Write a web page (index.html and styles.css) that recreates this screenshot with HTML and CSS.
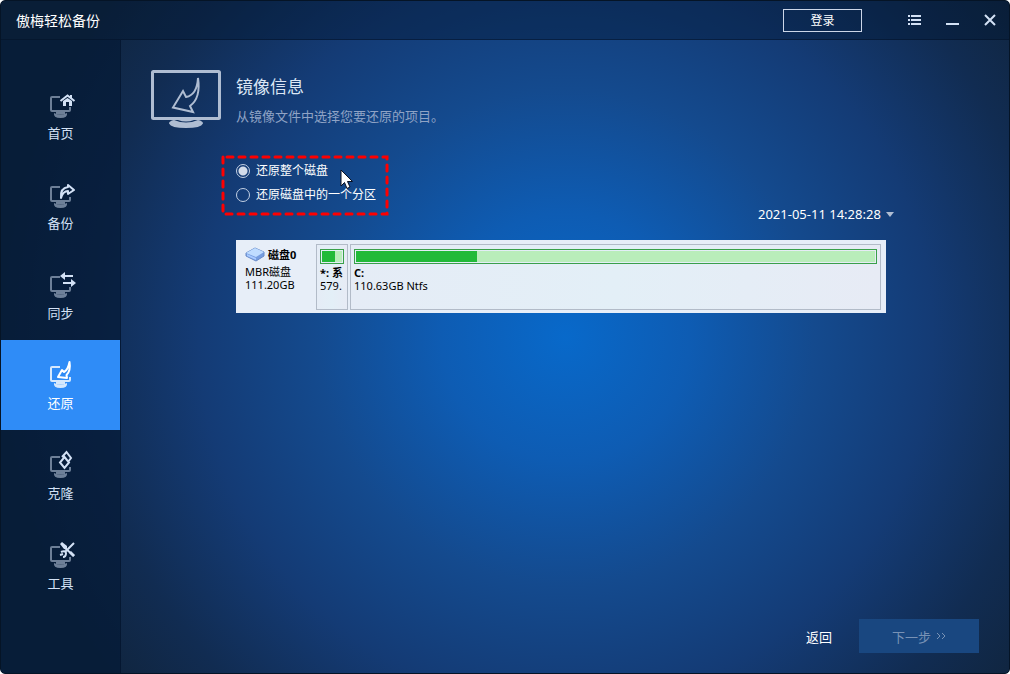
FILE: index.html
```html
<!DOCTYPE html>
<html lang="zh-CN">
<head>
    <meta charset="UTF-8">
    <meta name="viewport" content="width=device-width, initial-scale=1.0">
    <title>傲梅轻松备份</title>
    <link rel="stylesheet" href="styles.css">
</head>
<body>
    <!-- Shared monitor outline used by the sidebar icons -->
    <svg class="symbols" aria-hidden="true">
        <symbol id="monitor" viewBox="0 0 28 26">
            <path d="M12 4H4Q3 4 3 5V17Q3 18 4 18H21Q22 18 22 17V14" fill="none" stroke="currentColor" stroke-width="2"/>
            <path d="M6 20Q12 23 19 20Q20 25 12.500 25Q5 25 6 20Z" fill="currentColor"/>
            <path d="M8 19H17V21Q12 22 8 21Z" fill="currentColor"/>
        </symbol>
    </svg>

    <div class="window">
        <header class="titlebar">
            <h1 class="app-name">傲梅轻松备份</h1>
            <button class="login" type="button">登录</button>
            <button class="win-button" type="button" aria-label="菜单">
                <svg width="14" height="12" viewBox="0 0 14 12" fill="currentColor"><path d="M1 1h2v2H1zM4 1h10v2H4zM1 5h2v2H1zM4 5h10v2H4zM1 9h2v2H1zM4 9h10v2H4z"/></svg>
            </button>
            <button class="win-button" type="button" aria-label="最小化">
                <svg width="14" height="12" viewBox="0 0 14 12" fill="currentColor"><path d="M1 9h13v2H1z"/></svg>
            </button>
            <button class="win-button" type="button" aria-label="关闭">
                <svg width="14" height="12" viewBox="0 0 14 12" fill="none" stroke="currentColor" stroke-width="2"><path d="M2 1L12 11M12 1L2 11"/></svg>
            </button>
        </header>

        <div class="body">
            <nav class="sidebar">
                <a class="nav-item" href="#home">
                    <svg class="nav-icon" viewBox="0 0 28 26">
                        <use class="base" href="#monitor"/>
                        <path d="M12.500 8L19.500 2.500L26.500 8" fill="none" stroke="currentColor" stroke-width="2"/>
                        <path d="M15 8L19.500 5L24 8V13H21V9H18V13H15ZM22 2H24V6L22 4Z" fill="currentColor"/>
                    </svg>
                    <span>首页</span>
                </a>
                <a class="nav-item" href="#backup">
                    <svg class="nav-icon" viewBox="0 0 28 26">
                        <use class="base" href="#monitor"/>
                        <path d="M13 15Q12 5 20 4V2L26 7L20 11V8Q15 8 13 15Z" fill="none" stroke="currentColor" stroke-width="2" stroke-linejoin="round"/>
                    </svg>
                    <span>备份</span>
                </a>
                <a class="nav-item" href="#sync">
                    <svg class="nav-icon" viewBox="0 0 28 26">
                        <use class="base" href="#monitor"/>
                        <path d="M12 3L17 -1V2H25V4H17V7ZM28 10L23 6V9H15V11H23V14Z" fill="currentColor"/>
                    </svg>
                    <span>同步</span>
                </a>
                <a class="nav-item active" href="#restore" aria-current="page">
                    <svg class="nav-icon" viewBox="0 0 28 26">
                        <use class="base" href="#monitor"/>
                        <path d="M21.500 -1Q23 8 18.500 12L19 15L10 14L14 7L16 9Q20 7 21.500 -1Z" fill="none" stroke="currentColor" stroke-width="2" stroke-linejoin="round"/>
                    </svg>
                    <span>还原</span>
                </a>
                <a class="nav-item" href="#clone">
                    <svg class="nav-icon" viewBox="0 0 28 26">
                        <use class="base" href="#monitor"/>
                        <path d="M16.500 4L21 9.500L16.500 15L12 9.500ZM14 4L18.500 -1L23 5L20 9" fill="none" stroke="currentColor" stroke-width="2"/>
                    </svg>
                    <span>克隆</span>
                </a>
                <a class="nav-item" href="#tools">
                    <svg class="nav-icon" viewBox="0 0 28 26">
                        <use class="base" href="#monitor"/>
                        <path d="M26 0L17 9M17 5L26 13" fill="none" stroke="currentColor" stroke-width="2"/>
                        <path d="M12 1L14 -1L19 3L19 6L16 6ZM21 10L23 8L27 12L25 14Z" fill="currentColor"/>
                        <path d="M13 9Q17 7 18 10Q18 14 15 14M12 12L15 11" fill="none" stroke="currentColor" stroke-width="2"/>
                    </svg>
                    <span>工具</span>
                </a>
            </nav>

            <main class="content">
                <section class="page-head">
                    <svg class="page-icon" viewBox="0 0 70 58" aria-hidden="true">
                        <rect x="1.500" y="1.500" width="67" height="47" rx="1" fill="none" stroke="currentColor" stroke-width="3"/>
                        <path d="M23 50Q35 55 47 50Q52 51 52 53.500Q50 58 35 58Q20 58 18 53.500Q18 51 23 50Z" fill="currentColor"/>
                        <path d="M27 50H43Q35 53 27 50Z" fill="currentColor"/>
                        <path d="M47 8Q50 28 39 36L42 42L22 37.500L32 21L35 27Q46 25 47 8Z" fill="none" stroke="currentColor" stroke-width="2"/>
                    </svg>
                    <div>
                        <h2 class="page-title">镜像信息</h2>
                        <p class="page-hint">从镜像文件中选择您要还原的项目。</p>
                    </div>
                </section>

                <div class="options" role="radiogroup" aria-label="还原">
                    <label class="option"><input type="radio" name="scope" checked>还原整个磁盘</label>
                    <label class="option"><input type="radio" name="scope">还原磁盘中的一个分区</label>
                    <svg class="marker" aria-hidden="true"><rect width="100%" height="100%"/></svg>
                    <svg class="cursor" width="14" height="21" viewBox="0 0 14 21" aria-hidden="true">
                        <path d="M1 1V17L4.500 13.500L7 19.500L10 18L7.500 12.500H12.500Z" fill="#fff" stroke="#0a1020"/>
                    </svg>
                </div>

                <div class="version">
                    <select class="version-select" aria-label="备份时间">
                        <option>2021-05-11 14:28:28</option>
                    </select>
                    <svg class="caret" width="8" height="5" viewBox="0 0 8 5" aria-hidden="true"><path d="M0 0H8L4 5Z" fill="currentColor"/></svg>
                </div>

                <section class="disk">
                    <div class="disk-info">
                        <div class="disk-name">
                            <svg width="20" height="15" viewBox="0 0 20 15" aria-hidden="true">
                                <path d="M1 6L10 1L19 5V9L11 14L1 9Z" fill="#769de0" stroke="#688bc8"/>
                                <path d="M1 6L10 1L19 5L11 10Z" fill="#bfdcff"/>
                                <path d="M2 7L11 11V13L2 9Z" fill="#a8caff"/>
                            </svg>
                            <b>磁盘0</b>
                        </div>
                        <div>MBR磁盘</div>
                        <div>111.20GB</div>
                    </div>
                    <div class="partition reserved">
                        <div class="usage"><div class="used" style="width: 64%"></div></div>
                        <b>*: 系</b>
                        <div>579.</div>
                    </div>
                    <div class="partition">
                        <div class="usage"><div class="used" style="width: 23.300%"></div></div>
                        <b>C:</b>
                        <div>110.63GB Ntfs</div>
                    </div>
                </section>

                <footer class="actions">
                    <button class="back" type="button">返回</button>
                    <button class="next" type="button" disabled>
                        下一步
                        <svg width="10" height="8" viewBox="0 0 10 8" fill="none" stroke="currentColor"><path d="M1 1L4 4L1 7M6 1L9 4L6 7"/></svg>
                    </button>
                </footer>
            </main>
        </div>
    </div>
</body>
</html>
```
FILE: styles.css
```css
* {
    box-sizing: border-box;
}

body {
    margin: 0;
    background: #fff;
    color: #fff;
    font-family: "Noto Sans", "Noto Sans CJK SC", sans-serif;
    font-size: 12px;
}

h1, h2, p {
    margin: 0;
    font-weight: normal;
}

button {
    padding: 0;
    border: none;
    background: none;
    color: inherit;
    font: inherit;
}

svg {
    display: block;
}

.symbols {
    position: absolute;
    width: 0;
    height: 0;
}

.window {
    display: flex;
    flex-direction: column;
    min-height: 100vh;
    border: 1px solid #051426;
    border-radius: 5px;
    overflow: hidden;
    background: radial-gradient(ellipse 56% 84% at 56% 50%, #0869ca 0%, #0e5cb3 22%, #144a8e 44%, #143b75 65%, #112c52 85%, #10253f 100%);
}

/* Title bar */
.titlebar {
    display: flex;
    align-items: center;
    height: 39px;
    padding: 0 12px 0 15px;
    border-bottom: 1px solid rgba(2, 16, 38, 0.5);
    background: rgba(1, 20, 45, 0.4);
}

.app-name {
    flex: 1;
    font-size: 14px;
}

.login {
    width: 79px;
    height: 23px;
    margin-right: 45px;
    border: 1px solid #ccd6e8;
    line-height: 21px;
}

.win-button {
    color: #d3e1f5;
}

.win-button + .win-button {
    margin-left: 24px;
}

/* Sidebar */
.body {
    display: flex;
    flex: 1;
}

.sidebar {
    width: 120px;
    padding-top: 30px;
    border-right: 1px solid rgba(2, 16, 38, 0.4);
    background: rgba(4, 26, 54, 0.7);
}

.nav-item {
    display: flex;
    flex-direction: column;
    align-items: center;
    gap: 4px;
    height: 90px;
    padding-top: 23px;
    color: #d3e1f5;
    font-size: 13px;
    line-height: 20px;
    text-decoration: none;
}

.nav-item.active {
    background: #2f8cf7;
    color: #fff;
}

.nav-icon {
    width: 28px;
    height: 26px;
    margin-left: 2px;
    overflow: visible;
}

.base {
    opacity: 0.5;
}

.active .base {
    opacity: 0.8;
}

/* Main area */
.content {
    display: flex;
    flex: 1;
    flex-direction: column;
    padding: 30px 30px 20px;
}

.page-head {
    display: flex;
    gap: 15px;
    height: 85px;
}

.page-icon {
    width: 70px;
    height: 58px;
    color: #afbdd2;
}

.page-title {
    margin-top: 5px;
    color: #dce6f5;
    font-size: 17px;
    line-height: 24px;
}

.page-hint {
    margin-top: 7px;
    color: #8fa3c5;
    font-size: 13px;
    line-height: 20px;
}

.options {
    position: relative;
    align-self: flex-start;
    margin-left: 70px;
    padding: 4px 13px 9px 15px;
}

.option {
    display: flex;
    align-items: center;
    gap: 6px;
    line-height: 24px;
}

.option input {
    appearance: none;
    width: 14px;
    height: 14px;
    margin: 0;
    border: 1px solid #c3d0e4;
    border-radius: 50%;
}

.option input:checked {
    background: radial-gradient(circle, #d3dceb 0 4px, transparent 5px);
}

.marker {
    position: absolute;
    inset: 2px;
    width: calc(100% - 4px);
    height: calc(100% - 4px);
    overflow: visible;
}

.marker rect {
    fill: none;
    stroke: #f00;
    stroke-width: 3;
    stroke-dasharray: 6 6;
    stroke-dashoffset: -4;
    stroke-linecap: round;
}

.cursor {
    position: absolute;
    top: 14px;
    left: 119px;
}

.version {
    display: flex;
    align-items: center;
    align-self: flex-end;
    gap: 5px;
    margin: -13px 85px 0 0;
    color: #b0bdd2;
}

.version-select {
    appearance: none;
    padding: 0;
    border: none;
    background: none;
    color: #fff;
    font: 13px/22px "Noto Sans", sans-serif;
}

.version-select option {
    color: #000;
}

/* Disk map */
.disk {
    display: flex;
    gap: 2px;
    height: 73px;
    margin: 15px 93px 0 85px;
    padding: 4px 5px 3px 0;
    background: #e7eef8;
    color: #000;
    font-size: 11px;
    line-height: 13px;
}

.disk-info {
    width: 78px;
    padding-left: 9px;
}

.disk-name {
    display: flex;
    align-items: center;
    gap: 3px;
    height: 21px;
}

.partition {
    flex: 1;
    min-width: 0;
    padding: 4px 3px 3px;
    border: 1px solid #b2bbc8;
    background: linear-gradient(90deg, #e5ecf6, #e3eff7 50%, #e7ebf5);
    white-space: nowrap;
}

.partition.reserved {
    flex: none;
    width: 32px;
}

.partition b {
    display: block;
}

.usage {
    height: 15px;
    margin-bottom: 2px;
    padding: 1px;
    border: 1px solid #39a04a;
    background: #b9edba content-box;
}

.used {
    height: 100%;
    background: #22ba38;
}

/* Bottom buttons */
.actions {
    display: flex;
    align-items: center;
    justify-content: flex-end;
    gap: 27px;
    margin-top: auto;
    font-size: 13px;
}

.next {
    display: flex;
    align-items: center;
    justify-content: center;
    gap: 5px;
    width: 120px;
    height: 34px;
    background: #194780;
    color: #7892b5;
}
```
